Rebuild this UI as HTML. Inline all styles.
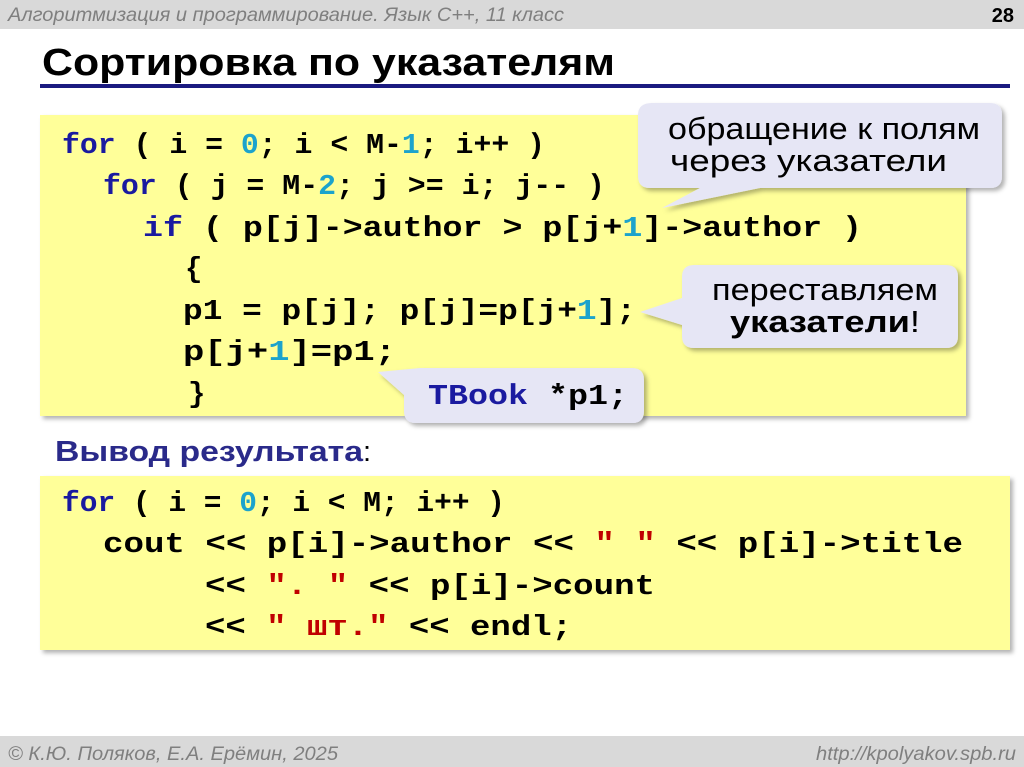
<!DOCTYPE html>
<html><head><meta charset="utf-8"><style>
html,body{margin:0;padding:0;background:#fff;width:1024px;height:767px;overflow:hidden}
svg{display:block}
.m{font-family:"Liberation Mono",monospace;font-weight:bold;font-size:29px;fill:#000}
.k{fill:#1a1aa0}.n{fill:#1ca3cc}.s{fill:#c00000}
.a{font-family:"Liberation Sans",sans-serif}
</style></head><body>
<svg width="1024" height="767" viewBox="0 0 1024 767" xmlns="http://www.w3.org/2000/svg">
<defs>
<filter id="sh" x="-10%" y="-10%" width="130%" height="140%"><feDropShadow dx="3" dy="3" stdDeviation="2" flood-color="#000" flood-opacity="0.3"/></filter>
</defs>
<rect x="0" y="0" width="1024" height="29" fill="#d9d9d9"/>
<text x="8" y="21" class="a" font-size="19" font-style="italic" fill="#7f7f7f" textLength="556" lengthAdjust="spacingAndGlyphs">Алгоритмизация и программирование. Язык С++, 11 класс</text>
<text x="1014" y="22" class="a" font-size="20" font-weight="bold" text-anchor="end">28</text>
<text x="42" y="75" class="a" font-size="38" font-weight="bold" textLength="573" lengthAdjust="spacingAndGlyphs">Сортировка по указателям</text>
<rect x="40" y="84" width="970" height="4" fill="#1a1a80"/>

<rect x="40" y="115" width="926" height="301" fill="#ffff99" filter="url(#sh)"/>
<text class="m" x="62" y="153" textLength="483" lengthAdjust="spacingAndGlyphs"><tspan class="k">for</tspan> ( i = <tspan class="n">0</tspan>; i &lt; M-<tspan class="n">1</tspan>; i++ )</text>
<text class="m" x="103" y="194" textLength="502" lengthAdjust="spacingAndGlyphs"><tspan class="k">for</tspan> ( j = M-<tspan class="n">2</tspan>; j &gt;= i; j-- )</text>
<text class="m" x="143" y="236" textLength="719" lengthAdjust="spacingAndGlyphs"><tspan class="k">if</tspan> ( p[j]-&gt;author &gt; p[j+<tspan class="n">1</tspan>]-&gt;author )</text>
<text class="m" x="185" y="277">{</text>
<text class="m" x="183" y="319" textLength="453" lengthAdjust="spacingAndGlyphs">p1 = p[j]; p[j]=p[j+<tspan class="n">1</tspan>];</text>
<text class="m" x="183" y="360" textLength="213" lengthAdjust="spacingAndGlyphs">p[j+<tspan class="n">1</tspan>]=p1;</text>
<text class="m" x="188" y="402">}</text>

<g filter="url(#sh)" fill="#e6e6f5">
<path d="M652,103 H990 Q1002,103 1002,115 V176 Q1002,188 990,188 H760 L662,208 L700,188 H650 Q638,188 638,176 V115 Q638,103 652,103 Z"/>
<path d="M694,265 H946 Q958,265 958,277 V336 Q958,348 946,348 H694 Q682,348 682,336 V325 L640,312 L682,298 V277 Q682,265 694,265 Z"/>
<path d="M416,368 H632 Q644,368 644,380 V411 Q644,423 632,423 H416 Q404,423 404,411 V395 L378,372 L420,368 Z"/>
</g>
<text x="668" y="139" class="a" font-size="31" textLength="312" lengthAdjust="spacingAndGlyphs">обращение к полям</text>
<text x="670" y="171" class="a" font-size="31" textLength="277" lengthAdjust="spacingAndGlyphs">через указатели</text>
<text x="712" y="300" class="a" font-size="31" textLength="226" lengthAdjust="spacingAndGlyphs">переставляем</text>
<text x="730" y="332" class="a" font-size="31" textLength="190" lengthAdjust="spacingAndGlyphs"><tspan font-weight="bold">указатели</tspan>!</text>
<text class="m" x="428" y="404" textLength="200" lengthAdjust="spacingAndGlyphs"><tspan class="k">TBook</tspan> *p1;</text>

<text x="55" y="461" class="a" font-size="29" font-weight="bold" fill="#2a2a8a" textLength="308" lengthAdjust="spacingAndGlyphs">Вывод результата</text>
<text x="363" y="461" class="a" font-size="29">:</text>

<rect x="40" y="476" width="970" height="174" fill="#ffff99" filter="url(#sh)"/>
<text class="m" x="62" y="511" textLength="443" lengthAdjust="spacingAndGlyphs"><tspan class="k">for</tspan> ( i = <tspan class="n">0</tspan>; i &lt; M; i++ )</text>
<text class="m" x="103" y="552" textLength="860" lengthAdjust="spacingAndGlyphs">cout &lt;&lt; p[i]-&gt;author &lt;&lt; <tspan class="s">" "</tspan> &lt;&lt; p[i]-&gt;title</text>
<text class="m" x="205" y="594" textLength="450" lengthAdjust="spacingAndGlyphs">&lt;&lt; <tspan class="s">". "</tspan> &lt;&lt; p[i]-&gt;count</text>
<text class="m" x="205" y="635" textLength="367" lengthAdjust="spacingAndGlyphs">&lt;&lt; <tspan class="s">" шт."</tspan> &lt;&lt; endl;</text>

<rect x="0" y="736" width="1024" height="31" fill="#d9d9d9"/>
<text x="8" y="760" class="a" font-size="19" font-style="italic" fill="#7f7f7f" textLength="330" lengthAdjust="spacingAndGlyphs">© К.Ю. Поляков, Е.А. Ерёмин, 2025</text>
<text x="1016" y="760" class="a" font-size="19" font-style="italic" fill="#7f7f7f" text-anchor="end" textLength="200" lengthAdjust="spacingAndGlyphs">http://kpolyakov.spb.ru</text>
</svg>
</body></html>
